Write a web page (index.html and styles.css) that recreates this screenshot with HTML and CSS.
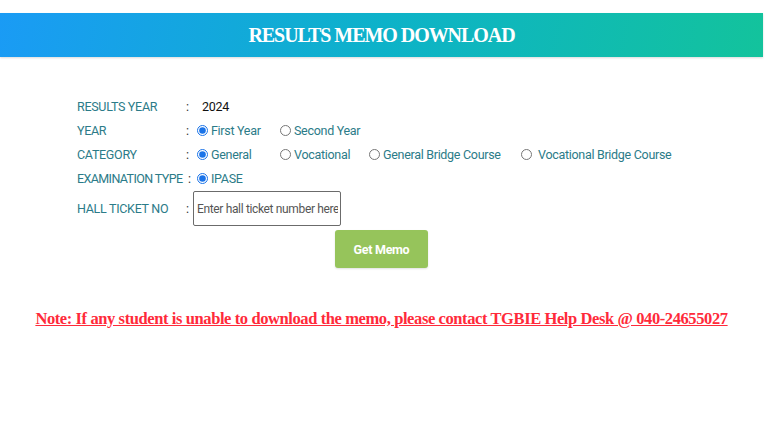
FILE: index.html
```html
<!DOCTYPE html>
<html lang="en">
  <head>
    <meta charset="UTF-8" />
    <meta name="viewport" content="width=device-width, initial-scale=1.0" />
    <title>Results Memo Download</title>
    <link rel="stylesheet" href="styles.css">
  </head>
  <body>
    <div class="page">
      <div class="banner">
        <h1>RESULTS MEMO DOWNLOAD</h1>
      </div>

      <form class="memo-form">
        <div class="field-grid">
          <span class="label">RESULTS YEAR</span>
          <span class="colon">:</span>
          <span class="value year-value">2024</span>

          <span class="label">YEAR</span>
          <span class="colon">:</span>
          <div class="value options">
            <label class="option"><input type="radio" name="year" checked />First Year</label>
            <label class="option"><input type="radio" name="year" />Second Year</label>
          </div>

          <span class="label">CATEGORY</span>
          <span class="colon">:</span>
          <div class="value options">
            <label class="option"><input type="radio" name="category" checked />General</label>
            <label class="option"><input type="radio" name="category" />Vocational</label>
            <label class="option"><input type="radio" name="category" />General Bridge Course</label>
            <label class="option wide"><input type="radio" name="category" />Vocational Bridge Course</label>
          </div>

          <span class="label tight">EXAMINATION TYPE</span>
          <span class="colon shifted">:</span>
          <div class="value options">
            <label class="option"><input type="radio" name="exam" checked />IPASE</label>
          </div>

          <span class="label">HALL TICKET NO</span>
          <span class="colon">:</span>
          <div class="value">
            <input type="text" class="ticket" placeholder="Enter hall ticket number here" />
          </div>
        </div>
        <div class="actions">
          <button type="button" class="submit">Get Memo</button>
        </div>
      </form>

      <p class="note">Note: If any student is unable to download the memo, please contact TGBIE Help Desk @ 040-24655027</p>
    </div>
  </body>
</html>
```

FILE: styles.css
```css
body {
  margin: 0;
  background: #ffffff;
  font-family: "Roboto", "Liberation Sans", sans-serif;
}
.page {
  width: 763px;
}
.banner {
  margin-top: 13px;
  height: 44px;
  display: flex;
  align-items: center;
  justify-content: center;
  background: linear-gradient(100deg, #1a9bf5 0%, #0db2c9 50%, #13c39c 100%);
  box-shadow: 0 1px 2px rgba(0, 0, 0, 0.15);
}
h1 {
  margin: 0;
  font-family: "Liberation Serif", serif;
  font-size: 20px;
  font-weight: bold;
  color: #ffffff;
  letter-spacing: -1.05px;
}
.memo-form {
  padding: 37px 0 0 77px;
}
.field-grid {
  display: grid;
  grid-template-columns: 108px 12px 1fr;
  grid-template-rows: repeat(4, 24px) 37px;
  align-items: center;
  font-size: 12.5px;
  letter-spacing: -0.3px;
  color: #2b7b88;
}
.label {
  white-space: nowrap;
}
.label.tight {
  letter-spacing: -0.6px;
}
.colon {
  padding-left: 1px;
  color: #333;
}
.colon.shifted {
  padding-left: 3px;
}
.year-value {
  padding-left: 5px;
  color: #111;
}
.options {
  display: grid;
  grid-template-columns: 83px 89px 152px auto;
  align-items: center;
}
.option {
  display: flex;
  align-items: center;
}
.option input {
  width: 11px;
  height: 11px;
  margin: 0 3px 0 0;
  accent-color: #1a73e8;
}
.option.wide input {
  margin-right: 6px;
}
.ticket {
  width: 148px;
  height: 35px;
  box-sizing: border-box;
  margin: 0 0 0 -4px;
  padding: 0 2px 0 3px;
  border: 1px solid #6b6b6b;
  border-radius: 2px;
  font-family: "Roboto", sans-serif;
  font-size: 12px;
  letter-spacing: -0.35px;
  color: #333;
}
.ticket::placeholder {
  color: #555;
}
.actions {
  display: flex;
  justify-content: center;
  margin: 3px 0 0 -77px;
}
.submit {
  width: 93px;
  height: 38px;
  border: none;
  border-radius: 3px;
  background: #96c45b;
  color: #ffffff;
  font-family: "Roboto", sans-serif;
  font-size: 12.5px;
  font-weight: bold;
  letter-spacing: -0.3px;
  box-shadow: 0 1px 2px rgba(0, 0, 0, 0.12);
}
.note {
  margin: 41px 0 0;
  text-align: center;
  font-family: "Liberation Serif", serif;
  font-size: 16.5px;
  font-weight: bold;
  letter-spacing: -0.4px;
  color: #ff2a3a;
  text-decoration: underline;
}
```
